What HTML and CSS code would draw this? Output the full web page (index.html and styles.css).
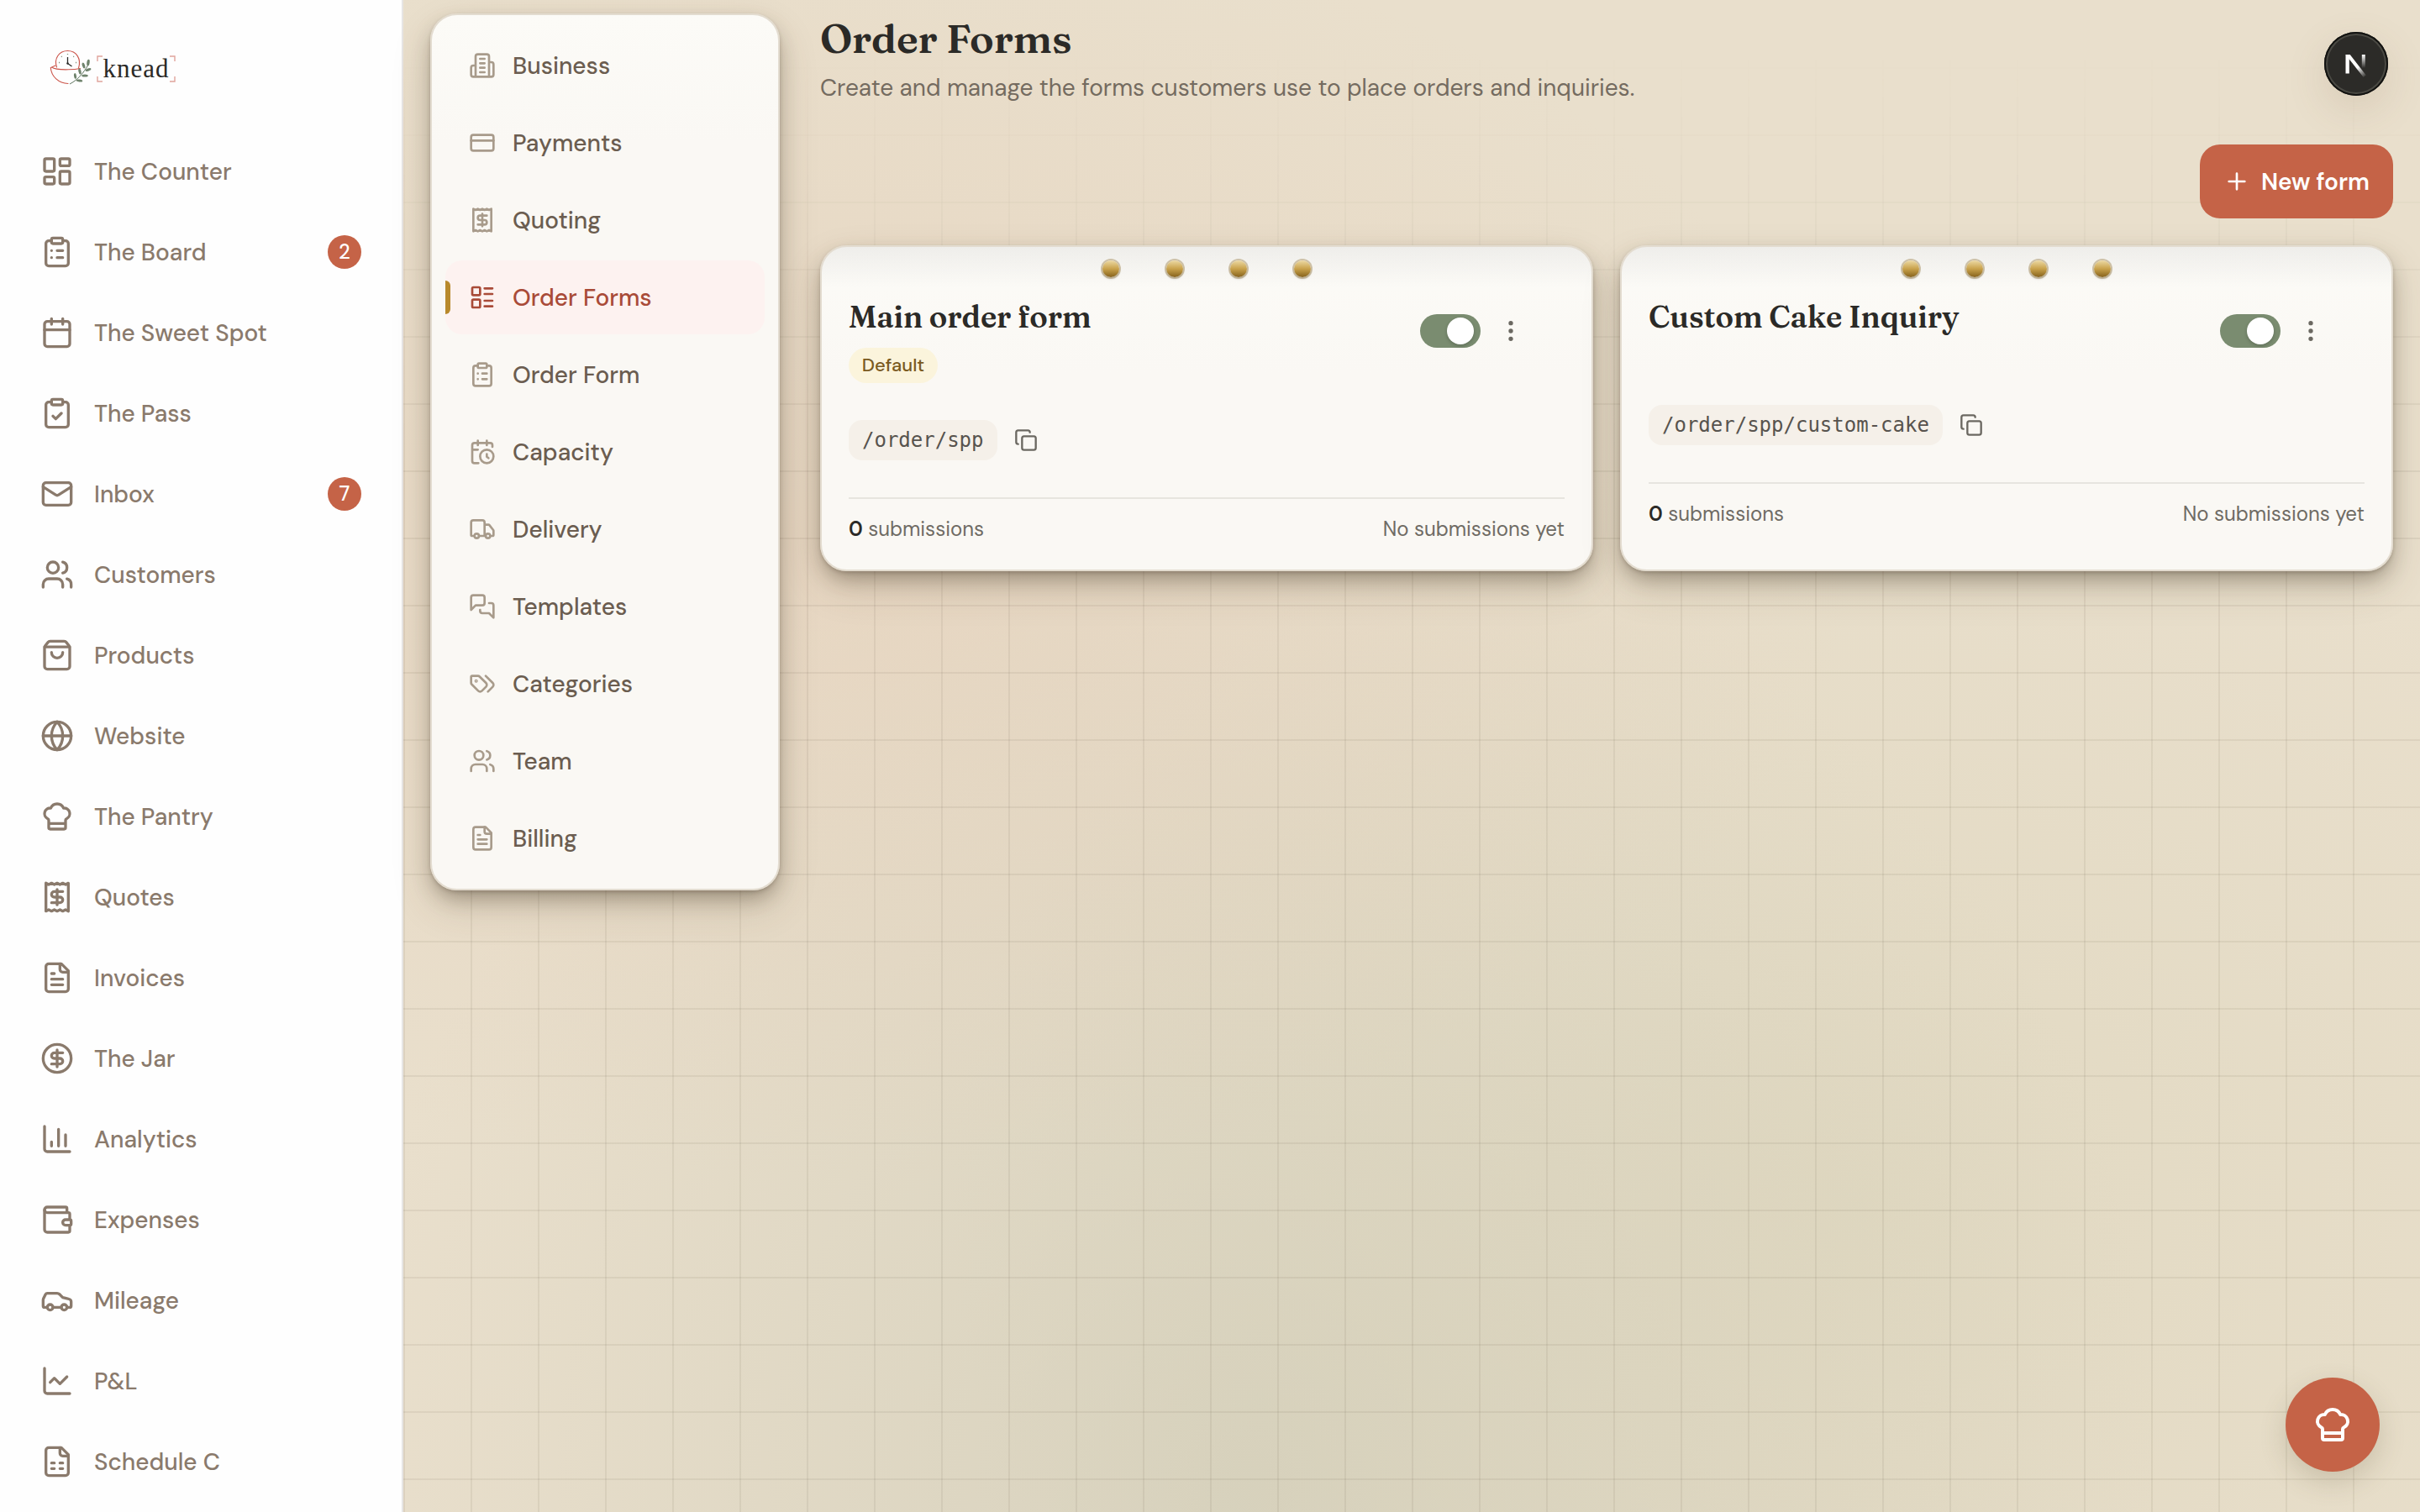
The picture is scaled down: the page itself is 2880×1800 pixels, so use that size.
FILE: index.html
```html
<!DOCTYPE html>
<html lang="en">
<head>
    <meta charset="UTF-8">
    <meta name="viewport" content="width=device-width, initial-scale=1.0">
    <title>Order Forms - knead</title>
    <link rel="stylesheet" href="styles.css">
</head>
<body>
    <!-- icon sprite -->
    <svg class="sprite">
        <symbol id="dashboard" viewBox="0 0 24 24"><rect width="7" height="9" x="3" y="3" rx="1"/><rect width="7" height="5" x="14" y="3" rx="1"/><rect width="7" height="9" x="14" y="12" rx="1"/><rect width="7" height="5" x="3" y="16" rx="1"/></symbol>
        <symbol id="clipboard-list" viewBox="0 0 24 24"><rect width="8" height="4" x="8" y="2" rx="1"/><path d="M16 4h2a2 2 0 0 1 2 2v14a2 2 0 0 1-2 2H6a2 2 0 0 1-2-2V6a2 2 0 0 1 2-2h2M12 11h4M12 16h4M8 11h.01M8 16h.01"/></symbol>
        <symbol id="calendar" viewBox="0 0 24 24"><path d="M8 2v4M16 2v4M3 10h18"/><rect width="18" height="18" x="3" y="4" rx="2"/></symbol>
        <symbol id="clipboard-check" viewBox="0 0 24 24"><rect width="8" height="4" x="8" y="2" rx="1"/><path d="M16 4h2a2 2 0 0 1 2 2v14a2 2 0 0 1-2 2H6a2 2 0 0 1-2-2V6a2 2 0 0 1 2-2h2M9 14l2 2 4-4"/></symbol>
        <symbol id="mail" viewBox="0 0 24 24"><rect width="20" height="16" x="2" y="4" rx="2"/><path d="m22 7-8.97 5.7a1.94 1.94 0 0 1-2.06 0L2 7"/></symbol>
        <symbol id="users" viewBox="0 0 24 24"><path d="M16 21v-2a4 4 0 0 0-4-4H6a4 4 0 0 0-4 4v2"/><circle cx="9" cy="7" r="4"/><path d="M22 21v-2a4 4 0 0 0-3-3.87M16 3.13a4 4 0 0 1 0 7.75"/></symbol>
        <symbol id="bag" viewBox="0 0 24 24"><path d="M16 10a4 4 0 0 1-8 0M3.103 6.034h17.794"/><path d="M3.4 5.467a2 2 0 0 0-.4 1.2V20a2 2 0 0 0 2 2h14a2 2 0 0 0 2-2V6.667a2 2 0 0 0-.4-1.2l-2-2.667A2 2 0 0 0 17 2H7a2 2 0 0 0-1.6.8z"/></symbol>
        <symbol id="globe" viewBox="0 0 24 24"><circle cx="12" cy="12" r="10"/><path d="M12 2a14.5 14.5 0 0 0 0 20 14.5 14.5 0 0 0 0-20M2 12h20"/></symbol>
        <symbol id="chef-hat" viewBox="0 0 24 24"><path d="M17 21a1 1 0 0 0 1-1v-5.35c0-.457.316-.844.727-1.041a4 4 0 0 0-2.134-7.589 5 5 0 0 0-9.186 0 4 4 0 0 0-2.134 7.588c.411.198.727.585.727 1.041V20a1 1 0 0 0 1 1ZM6 17h12"/></symbol>
        <symbol id="receipt" viewBox="0 0 24 24"><path d="M4 2v20l2-1 2 1 2-1 2 1 2-1 2 1 2-1 2 1V2l-2 1-2-1-2 1-2-1-2 1-2-1-2 1Z"/><path d="M16 8h-6a2 2 0 1 0 0 4h4a2 2 0 1 1 0 4H8M12 17.5v-11"/></symbol>
        <symbol id="file-text" viewBox="0 0 24 24"><path d="M15 2H6a2 2 0 0 0-2 2v16a2 2 0 0 0 2 2h12a2 2 0 0 0 2-2V7Z"/><path d="M14 2v4a2 2 0 0 0 2 2h4M10 9H8M16 13H8M16 17H8"/></symbol>
        <symbol id="dollar" viewBox="0 0 24 24"><circle cx="12" cy="12" r="10"/><path d="M16 8h-6a2 2 0 1 0 0 4h4a2 2 0 1 1 0 4H8M12 18V6"/></symbol>
        <symbol id="chart-column" viewBox="0 0 24 24"><path d="M3 3v16a2 2 0 0 0 2 2h16M18 17V9M13 17V5M8 17v-3"/></symbol>
        <symbol id="wallet" viewBox="0 0 24 24"><path d="M19 7V4a1 1 0 0 0-1-1H5a2 2 0 0 0 0 4h15a1 1 0 0 1 1 1v4h-3a2 2 0 0 0 0 4h3a1 1 0 0 0 1-1v-2a1 1 0 0 0-1-1"/><path d="M3 5v14a2 2 0 0 0 2 2h15a1 1 0 0 0 1-1v-4"/></symbol>
        <symbol id="car" viewBox="0 0 24 24"><path d="M19 17h2c.6 0 1-.4 1-1v-3c0-.9-.7-1.7-1.5-1.9C18.7 10.6 16 10 16 10s-1.3-1.4-2.2-2.3c-.5-.4-1.1-.7-1.8-.7H5c-.6 0-1.1.4-1.4.9l-1.4 2.9A3.7 3.7 0 0 0 2 12v4c0 .6.4 1 1 1h2M9 17h6"/><circle cx="7" cy="17" r="2"/><circle cx="17" cy="17" r="2"/></symbol>
        <symbol id="chart-line" viewBox="0 0 24 24"><path d="M3 3v16a2 2 0 0 0 2 2h16M19 9l-5 5-4-4-3 3"/></symbol>
        <symbol id="file-sheet" viewBox="0 0 24 24"><path d="M15 2H6a2 2 0 0 0-2 2v16a2 2 0 0 0 2 2h12a2 2 0 0 0 2-2V7Z"/><path d="M14 2v4a2 2 0 0 0 2 2h4M8 13h2M14 13h2M8 17h2M14 17h2"/></symbol>
        <symbol id="building" viewBox="0 0 24 24"><path d="M6 22V4a2 2 0 0 1 2-2h8a2 2 0 0 1 2 2v18ZM6 12H4a2 2 0 0 0-2 2v6a2 2 0 0 0 2 2h2M18 9h2a2 2 0 0 1 2 2v9a2 2 0 0 1-2 2h-2M10 6h4M10 10h4M10 14h4M10 18h4"/></symbol>
        <symbol id="card" viewBox="0 0 24 24"><rect width="20" height="14" x="2" y="5" rx="2"/><path d="M2 10h20"/></symbol>
        <symbol id="layout-list" viewBox="0 0 24 24"><rect width="7" height="7" x="3" y="3" rx="1"/><rect width="7" height="7" x="3" y="14" rx="1"/><path d="M14 4h7M14 9h7M14 15h7M14 20h7"/></symbol>
        <symbol id="calendar-clock" viewBox="0 0 24 24"><path d="M21 7.5V6a2 2 0 0 0-2-2H5a2 2 0 0 0-2 2v14a2 2 0 0 0 2 2h3.5M16 2v4M8 2v4M3 10h5M17.5 17.5 16 16.3V14"/><circle cx="16" cy="16" r="6"/></symbol>
        <symbol id="truck" viewBox="0 0 24 24"><path d="M14 18V6a2 2 0 0 0-2-2H4a2 2 0 0 0-2 2v11a1 1 0 0 0 1 1h2M15 18H9M19 18h2a1 1 0 0 0 1-1v-3.65a1 1 0 0 0-.22-.624l-3.48-4.35A1 1 0 0 0 17.52 8H14"/><circle cx="17" cy="18" r="2"/><circle cx="7" cy="18" r="2"/></symbol>
        <symbol id="messages" viewBox="0 0 24 24"><path d="M14 9a2 2 0 0 1-2 2H6l-4 4V4a2 2 0 0 1 2-2h8a2 2 0 0 1 2 2Z"/><path d="M18 9h2a2 2 0 0 1 2 2v11l-4-4h-6a2 2 0 0 1-2-2v-1"/></symbol>
        <symbol id="tags" viewBox="0 0 24 24"><path d="m15 5 6.3 6.3a2.4 2.4 0 0 1 0 3.4L17 19"/><path d="M9.586 5.586A2 2 0 0 0 8.172 5H3a1 1 0 0 0-1 1v5.172a2 2 0 0 0 .586 1.414L8.29 18.29a2.426 2.426 0 0 0 3.42 0l3.58-3.58a2.426 2.426 0 0 0 0-3.42z"/><circle cx="6.5" cy="9.5" r=".5"/></symbol>
        <symbol id="copy" viewBox="0 0 24 24"><rect width="14" height="14" x="8" y="8" rx="2"/><path d="M4 16c-1.1 0-2-.9-2-2V4c0-1.1.9-2 2-2h10c1.1 0 2 .9 2 2"/></symbol>
        <symbol id="more" viewBox="0 0 24 24"><circle cx="12" cy="12" r="1"/><circle cx="12" cy="5" r="1"/><circle cx="12" cy="19" r="1"/></symbol>
        <symbol id="plus" viewBox="0 0 24 24"><path d="M5 12h14M12 5v14"/></symbol>
    </svg>

    <div class="app">
        <aside class="sidebar">
            <div class="logo">
                <svg class="logo-mark" viewBox="0 0 50 42">
                    <g fill="none" stroke="#cb5348" stroke-width="1.1" stroke-linecap="round">
                        <path d="M8.5 21C5 11 11 1.500 21.500 1.500S38 11 34.500 22"/>
                        <path d="M2.500 21c4 3 12 3 20 2.800 6 0 10-.4 14-1.300M7 19l-5.700 2.500C2 32 11 40.500 22 40.500"/>
                    </g>
                    <path d="M21.5 9v7.5l5 3.5" fill="none" stroke="#2b2a28" stroke-width="1.3"/>
                    <circle cx="21.5" cy="16.5" r="1.2" fill="#2b2a28"/>
                    <path d="M21.5 5v1M14 8l.7.7M29 8l-.7.7M11 15.5h1M31 15.5h1" stroke="#7a8c70" stroke-width="1.3"/>
                    <path d="M24 41c8-4 16-12 22-23" fill="none" stroke="#5f7560"/>
                    <g fill="#6f836c">
                        <ellipse cx="46" cy="15.5" rx="1.7" ry="3.8" transform="rotate(8 46 15.5)"/>
                        <ellipse cx="40.5" cy="19" rx="1.6" ry="3.5" transform="rotate(-18 40.5 19)"/>
                        <ellipse cx="46" cy="24" rx="3.6" ry="1.5" transform="rotate(-22 46 24)"/>
                        <ellipse cx="36" cy="26" rx="1.6" ry="3.6" transform="rotate(-12 36 26)"/>
                        <ellipse cx="42" cy="31" rx="3.8" ry="1.6"/>
                        <ellipse cx="30.5" cy="31.5" rx="1.5" ry="3.4" transform="rotate(-8 30.5 31.5)"/>
                        <ellipse cx="35.5" cy="37" rx="3.8" ry="1.5" transform="rotate(6 35.5 37)"/>
                    </g>
                </svg>
                <div class="logo-word">
                    <svg class="logo-frame" viewBox="0 0 94 32"><path d="M1 7V1h6M87 1h6v6M1 25v6h6M87 31h6v-6" fill="none" stroke="#e0a49c" stroke-width="1.4"/></svg>
                    <span>knead</span>
                </div>
            </div>
            <nav class="menu">
                <a class="menu-item"><svg class="icon"><use href="#dashboard"/></svg>The Counter</a>
                <a class="menu-item"><svg class="icon"><use href="#clipboard-list"/></svg>The Board<span class="count">2</span></a>
                <a class="menu-item"><svg class="icon"><use href="#calendar"/></svg>The Sweet Spot</a>
                <a class="menu-item"><svg class="icon"><use href="#clipboard-check"/></svg>The Pass</a>
                <a class="menu-item"><svg class="icon"><use href="#mail"/></svg>Inbox<span class="count">7</span></a>
                <a class="menu-item"><svg class="icon"><use href="#users"/></svg>Customers</a>
                <a class="menu-item"><svg class="icon"><use href="#bag"/></svg>Products</a>
                <a class="menu-item"><svg class="icon"><use href="#globe"/></svg>Website</a>
                <a class="menu-item"><svg class="icon"><use href="#chef-hat"/></svg>The Pantry</a>
                <a class="menu-item"><svg class="icon"><use href="#receipt"/></svg>Quotes</a>
                <a class="menu-item"><svg class="icon"><use href="#file-text"/></svg>Invoices</a>
                <a class="menu-item"><svg class="icon"><use href="#dollar"/></svg>The Jar</a>
                <a class="menu-item"><svg class="icon"><use href="#chart-column"/></svg>Analytics</a>
                <a class="menu-item"><svg class="icon"><use href="#wallet"/></svg>Expenses</a>
                <a class="menu-item"><svg class="icon"><use href="#car"/></svg>Mileage</a>
                <a class="menu-item"><svg class="icon"><use href="#chart-line"/></svg>P&amp;L</a>
                <a class="menu-item"><svg class="icon"><use href="#file-sheet"/></svg>Schedule C</a>
            </nav>
        </aside>

        <main class="main">
            <nav class="settings">
                <a class="settings-item"><svg class="icon"><use href="#building"/></svg>Business</a>
                <a class="settings-item"><svg class="icon"><use href="#card"/></svg>Payments</a>
                <a class="settings-item"><svg class="icon"><use href="#receipt"/></svg>Quoting</a>
                <a class="settings-item active"><svg class="icon"><use href="#layout-list"/></svg>Order Forms</a>
                <a class="settings-item"><svg class="icon"><use href="#clipboard-list"/></svg>Order Form</a>
                <a class="settings-item"><svg class="icon"><use href="#calendar-clock"/></svg>Capacity</a>
                <a class="settings-item"><svg class="icon"><use href="#truck"/></svg>Delivery</a>
                <a class="settings-item"><svg class="icon"><use href="#messages"/></svg>Templates</a>
                <a class="settings-item"><svg class="icon"><use href="#tags"/></svg>Categories</a>
                <a class="settings-item"><svg class="icon"><use href="#users"/></svg>Team</a>
                <a class="settings-item"><svg class="icon"><use href="#file-text"/></svg>Billing</a>
            </nav>

            <section class="content">
                <h1>Order Forms</h1>
                <p class="subtitle">Create and manage the forms customers use to place orders and inquiries.</p>
                <div class="actions">
                    <button class="new-form"><svg class="icon"><use href="#plus"/></svg>New form</button>
                </div>

                <div class="cards">
                    <article class="card">
                        <div class="rivets"><i></i><i></i><i></i><i></i></div>
                        <div class="card-head">
                            <div>
                                <h2>Main order form</h2>
                                <span class="tag">Default</span>
                            </div>
                            <div class="controls">
                                <span class="toggle"></span>
                                <svg class="icon"><use href="#more"/></svg>
                            </div>
                        </div>
                        <div class="link">
                            <code>/order/spp</code>
                            <svg class="icon"><use href="#copy"/></svg>
                        </div>
                        <div class="card-foot">
                            <span><b>0</b> submissions</span>
                            <span>No submissions yet</span>
                        </div>
                    </article>

                    <article class="card">
                        <div class="rivets"><i></i><i></i><i></i><i></i></div>
                        <div class="card-head">
                            <div>
                                <h2>Custom Cake Inquiry</h2>
                            </div>
                            <div class="controls">
                                <span class="toggle"></span>
                                <svg class="icon"><use href="#more"/></svg>
                            </div>
                        </div>
                        <div class="link">
                            <code>/order/spp/custom-cake</code>
                            <svg class="icon"><use href="#copy"/></svg>
                        </div>
                        <div class="card-foot">
                            <span><b>0</b> submissions</span>
                            <span>No submissions yet</span>
                        </div>
                    </article>
                </div>
            </section>
        </main>
    </div>

    <div class="dev-badge">
        <svg viewBox="0 0 76 76">
            <defs>
                <linearGradient id="fade-a" gradientUnits="userSpaceOnUse" x1="40" y1="42" x2="49" y2="54"><stop offset="0" stop-color="#fff"/><stop offset="1" stop-color="#fff" stop-opacity="0"/></linearGradient>
                <linearGradient id="fade-b" gradientUnits="userSpaceOnUse" x1="0" y1="27" x2="0" y2="43"><stop offset="0" stop-color="#fff"/><stop offset="1" stop-color="#fff" stop-opacity="0"/></linearGradient>
            </defs>
            <rect x="25.5" y="27" width="4.3" height="22.5" fill="#fff"/>
            <path d="M25.5 27h5.2l19 24.5-3 2.5z" fill="url(#fade-a)"/>
            <rect x="44.8" y="27" width="4" height="16" fill="url(#fade-b)"/>
        </svg>
    </div>
    <button class="fab"><svg class="icon"><use href="#chef-hat"/></svg></button>
</body>
</html>
```

FILE: styles.css
```css
* {
    box-sizing: border-box;
}
body {
    margin: 0;
    font-family: "DM Sans", Inter, sans-serif;
    font-size: 28px;
    color: #2b2a27;
}
h1, h2, p {
    margin: 0;
}
button {
    border: 0;
    font: inherit;
}
.sprite {
    display: none;
}
.icon {
    flex: none;
    width: 32px;
    height: 32px;
    fill: none;
    stroke: currentColor;
    stroke-width: 2;
    stroke-linecap: round;
    stroke-linejoin: round;
}
.app {
    display: flex;
    height: 1800px;
    overflow: hidden;
}

/* sidebar */
.sidebar {
    flex: none;
    width: 480px;
    padding: 56px 24px 0;
    background: #fefefe;
    border-right: 2px solid #e7e5e4;
}
.logo {
    display: flex;
    align-items: center;
    gap: 6px;
    height: 48px;
    margin: 0 0 56px 35px;
}
.logo-mark {
    width: 50px;
    height: 42px;
}
.logo-word {
    position: relative;
    width: 94px;
    height: 32px;
    margin-top: 4px;
    text-align: center;
    font: 31px/31px "Liberation Serif", serif;
    letter-spacing: 1px;
}
.logo-frame {
    position: absolute;
    inset: 0;
}
.menu {
    display: flex;
    flex-direction: column;
    gap: 8px;
}
.menu-item {
    display: flex;
    align-items: center;
    gap: 24px;
    height: 88px;
    padding: 0 24px;
    font-weight: 500;
    color: #8a7a6c;
}
.menu-item .icon {
    width: 40px;
    height: 40px;
}
.count {
    width: 40px;
    height: 40px;
    margin-left: auto;
    border-radius: 50%;
    background: #c56347;
    color: #fff;
    font-size: 24px;
    line-height: 40px;
    text-align: center;
}

/* page background with the grid drawn over it */
.main {
    position: relative;
    flex: 1;
    display: flex;
    align-items: flex-start;
    gap: 48px;
    padding: 16px 32px;
    background:
        radial-gradient(ellipse 50% 42% at 22% 36%, rgba(227, 196, 172, .32), transparent),
        radial-gradient(ellipse 45% 66% at 42% 98%, rgba(200, 198, 176, .52), transparent),
        radial-gradient(ellipse 45% 52% at 72% 80%, rgba(214, 208, 178, .4), transparent),
        #e9dfcc;
}
.main::before {
    content: "";
    position: absolute;
    inset: 0;
    background-image:
        linear-gradient(rgba(95, 85, 65, .085) 2px, transparent 2px),
        linear-gradient(90deg, rgba(95, 85, 65, .085) 2px, transparent 2px);
    background-size: 80px 80px;
    -webkit-mask-image: linear-gradient(transparent 60px, #000 560px);
    mask-image: linear-gradient(transparent 60px, #000 560px);
}
.settings,
.card {
    position: relative;
    border: 2px solid #e3dcd0;
    border-radius: 32px;
    background: linear-gradient(#fcfbf7, #faf8f4 150px);
    box-shadow: 0 2px 4px rgba(60, 45, 30, .2), 0 12px 24px -4px rgba(60, 50, 35, .38), 0 20px 48px rgba(80, 60, 40, .16);
}

/* settings menu */
.settings {
    flex: none;
    display: flex;
    flex-direction: column;
    gap: 4px;
    width: 416px;
    padding: 16px;
}
.settings-item {
    position: relative;
    display: flex;
    align-items: center;
    gap: 20px;
    height: 88px;
    padding: 0 28px;
    border-radius: 20px;
    font-weight: 500;
    color: #6b5d50;
}
.settings-item .icon {
    color: #a89b8b;
}
.settings-item.active {
    background: #fdf2f0;
    color: #a94b38;
}
.settings-item.active .icon {
    color: #a94b38;
}
.settings-item.active::before {
    content: "";
    position: absolute;
    left: 0;
    top: 24px;
    width: 6px;
    height: 40px;
    border-radius: 0 6px 6px 0;
    background: #b8892b;
}

/* content */
.content {
    position: relative;
    flex: 1;
}
h1 {
    font: 600 48px/60px Fraunces, "Liberation Serif", serif;
    letter-spacing: -.1px;
}
.subtitle {
    margin-top: 9px;
    line-height: 40px;
    color: #746b60;
}
.actions {
    display: flex;
    justify-content: flex-end;
    margin: 47px 0 32px;
}
.new-form {
    display: flex;
    align-items: center;
    gap: 13px;
    width: 230px;
    height: 88px;
    padding: 0 28px;
    border-radius: 24px;
    background: #c56347;
    color: #fff;
    font-weight: 600;
    white-space: nowrap;
}
.cards {
    display: grid;
    grid-template-columns: 1fr 1fr;
    gap: 32px;
}
.card {
    padding: 56px 32px 32px;
    background: linear-gradient(rgba(120, 120, 125, .1), transparent 48px), linear-gradient(#fcfbf7, #faf8f4 150px);
}
.rivets {
    position: absolute;
    top: 16px;
    left: 0;
    right: 0;
    display: flex;
    justify-content: center;
    gap: 56px;
}
.rivets i {
    width: 20px;
    height: 20px;
    border-radius: 50%;
    background: linear-gradient(#ecd9a4, #c9a24c 50%, #86621c);
    box-shadow: 0 0 0 2px rgba(150, 120, 60, .4), 0 2px 3px rgba(0, 0, 0, .2);
}
.card-head {
    display: flex;
    justify-content: space-between;
    align-items: flex-start;
    min-height: 88px;
}
h2 {
    font: 600 36px/54px Fraunces, "Liberation Serif", serif;
    letter-spacing: -.1px;
}
.tag {
    display: block;
    width: 106px;
    height: 42px;
    margin-top: 10px;
    border-radius: 21px;
    background: #fbf4dc;
    color: #7a5a1f;
    font-size: 22px;
    font-weight: 500;
    line-height: 42px;
    text-align: center;
}
.controls {
    display: flex;
    align-items: center;
    gap: 20px;
    height: 88px;
    margin-right: 48px;
    color: #6b6861;
}
.toggle {
    width: 72px;
    height: 40px;
    padding: 4px 8px;
    border-radius: 20px;
    background: #7a8c70;
}
.toggle::before {
    content: "";
    display: block;
    width: 32px;
    height: 32px;
    margin-left: auto;
    border-radius: 50%;
    background: #fff;
    box-shadow: 0 2px 4px rgba(0, 0, 0, .2);
}
.link {
    display: flex;
    align-items: center;
    gap: 20px;
    margin: 44px 0;
    color: #6b6861;
}
.link .icon {
    width: 28px;
    height: 28px;
}
code {
    padding: 0 16px;
    border-radius: 16px;
    background: #f5f0e9;
    color: #57534e;
    font: 24px/48px Menlo, "DejaVu Sans Mono", monospace;
}
.card-foot {
    display: flex;
    justify-content: space-between;
    padding-top: 20px;
    border-top: 2px solid #e7e5df;
    color: #6f6b64;
    font-size: 24px;
    line-height: 32px;
}
.card-foot b {
    font-weight: 600;
    color: #2b2a27;
}

/* floating buttons */
.dev-badge {
    position: fixed;
    top: 38px;
    right: 38px;
    width: 76px;
    height: 76px;
    border-radius: 50%;
    background: #2c2b28;
    box-shadow: inset 0 0 0 2px #121210, inset 0 0 0 4px #4a4943, 0 16px 48px rgba(120, 90, 60, .15);
}
.fab {
    position: fixed;
    right: 48px;
    bottom: 48px;
    display: grid;
    place-items: center;
    width: 112px;
    height: 112px;
    border-radius: 50%;
    background: #c56347;
    color: #fff;
    box-shadow: 0 12px 32px rgba(90, 80, 50, .2);
}
.fab .icon {
    width: 48px;
    height: 48px;
}
```
